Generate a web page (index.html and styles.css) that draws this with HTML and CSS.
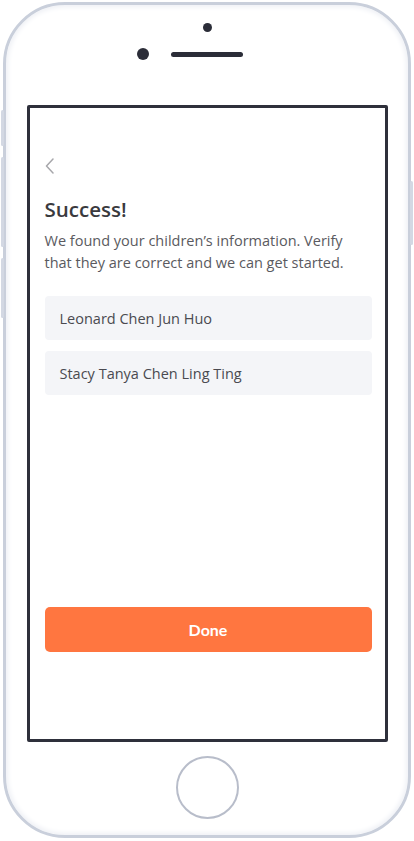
FILE: index.html
```html
<!DOCTYPE html>
<html lang="en">
<head>
<meta charset="utf-8">
<title>Success</title>
<link rel="stylesheet" href="styles.css">
</head>
<body>
<div class="phone">
  <span class="side side-l1"></span>
  <span class="side side-l2"></span>
  <span class="side side-l3"></span>
  <span class="side side-r1"></span>
  <div class="top">
    <span class="cam"></span>
    <div class="row">
      <span class="lens"></span>
      <span class="speaker"></span>
    </div>
  </div>
  <div class="screen">
    <svg class="back" width="10" height="16" viewBox="0 0 10 16" aria-hidden="true">
      <path d="M8 1 L1.5 8 L8 15" fill="none" stroke="#a7a7ab" stroke-width="1.5" stroke-linecap="round" stroke-linejoin="round"/>
    </svg>
    <h1 class="title">Success!</h1>
    <p class="desc">We found your children’s information. Verify that they are correct and we can get started.</p>
    <div class="list">
      <div class="item">Leonard Chen Jun Huo</div>
      <div class="item">Stacy Tanya Chen Ling Ting</div>
    </div>
    <button class="done">Done</button>
  </div>
  <div class="bottom">
    <span class="home"></span>
  </div>
</div>
</body>
</html>
```

FILE: styles.css
```css
* { box-sizing: border-box; }
html, body { margin: 0; padding: 0; background: #ffffff; }
body { font-family: "Open Sans", "Noto Sans", sans-serif; width: 414px; height: 841px; overflow: hidden; }

.phone {
  position: relative;
  width: 408px;
  height: 836px;
  margin: 2px 0 0 3px;
  border: 3px solid #c9cfdb;
  border-radius: 62px;
  box-shadow: inset 0 0 5px 2px #eef0f5;
  background: #ffffff;
  display: flex;
  flex-direction: column;
  align-items: center;
}

.side { position: absolute; background: #d3d8e3; border-radius: 2px; width: 3px; }
.side-l1 { left: -5px; top: 105px; height: 36px; }
.side-l2 { left: -5px; top: 152px; height: 90px; }
.side-l3 { left: -5px; top: 253px; height: 60px; }
.side-r1 { right: -5px; top: 176px; height: 64px; }

.top {
  height: 100px;
  align-self: stretch;
  display: flex;
  flex-direction: column;
  align-items: center;
  padding-top: 18px;
}
.cam { width: 9px; height: 9px; border-radius: 50%; background: #2b2d38; }
.row {
  align-self: stretch;
  display: flex;
  align-items: center;
  gap: 22px;
  padding-left: 131px;
  margin-top: 16px;
}
.lens { width: 12px; height: 12px; border-radius: 50%; background: #2b2d38; }
.speaker { width: 72px; height: 5px; border-radius: 3px; background: #2b2d38; }

.screen {
  width: 361px;
  height: 637px;
  border: 3px solid #2e303b;
  border-radius: 2px;
  padding: 50px 13px 0 15px;
  display: flex;
  flex-direction: column;
}
.back { display: block; margin-left: 0; }
.title {
  margin: 22px 0 0;
  font-size: 20.5px;
  font-weight: 600;
  color: #3a3a3e;
  line-height: 26px;
}
.desc {
  margin: 8px 0 0;
  font-size: 14.5px;
  line-height: 22px;
  color: #5a5a60;
}
.list { margin-top: 22px; display: flex; flex-direction: column; gap: 11px; }
.item {
  height: 44px;
  flex: 0 0 44px;
  background: #f4f5f8;
  border-radius: 4px;
  padding-left: 15px;
  display: flex;
  align-items: center;
  font-size: 14.5px;
  color: #4a4a50;
}
.done {
  margin-top: 212px;
  height: 45px;
  flex: 0 0 45px;
  border: none;
  border-radius: 5px;
  background: #ff7640;
  color: #ffffff;
  font-family: Lato, "Noto Sans", sans-serif;
  font-size: 16px;
  font-weight: 700;
}

.bottom { padding-top: 14px; }
.home {
  display: block;
  width: 63px;
  height: 63px;
  border-radius: 50%;
  border: 2.5px solid #b8bdca;
}
```
